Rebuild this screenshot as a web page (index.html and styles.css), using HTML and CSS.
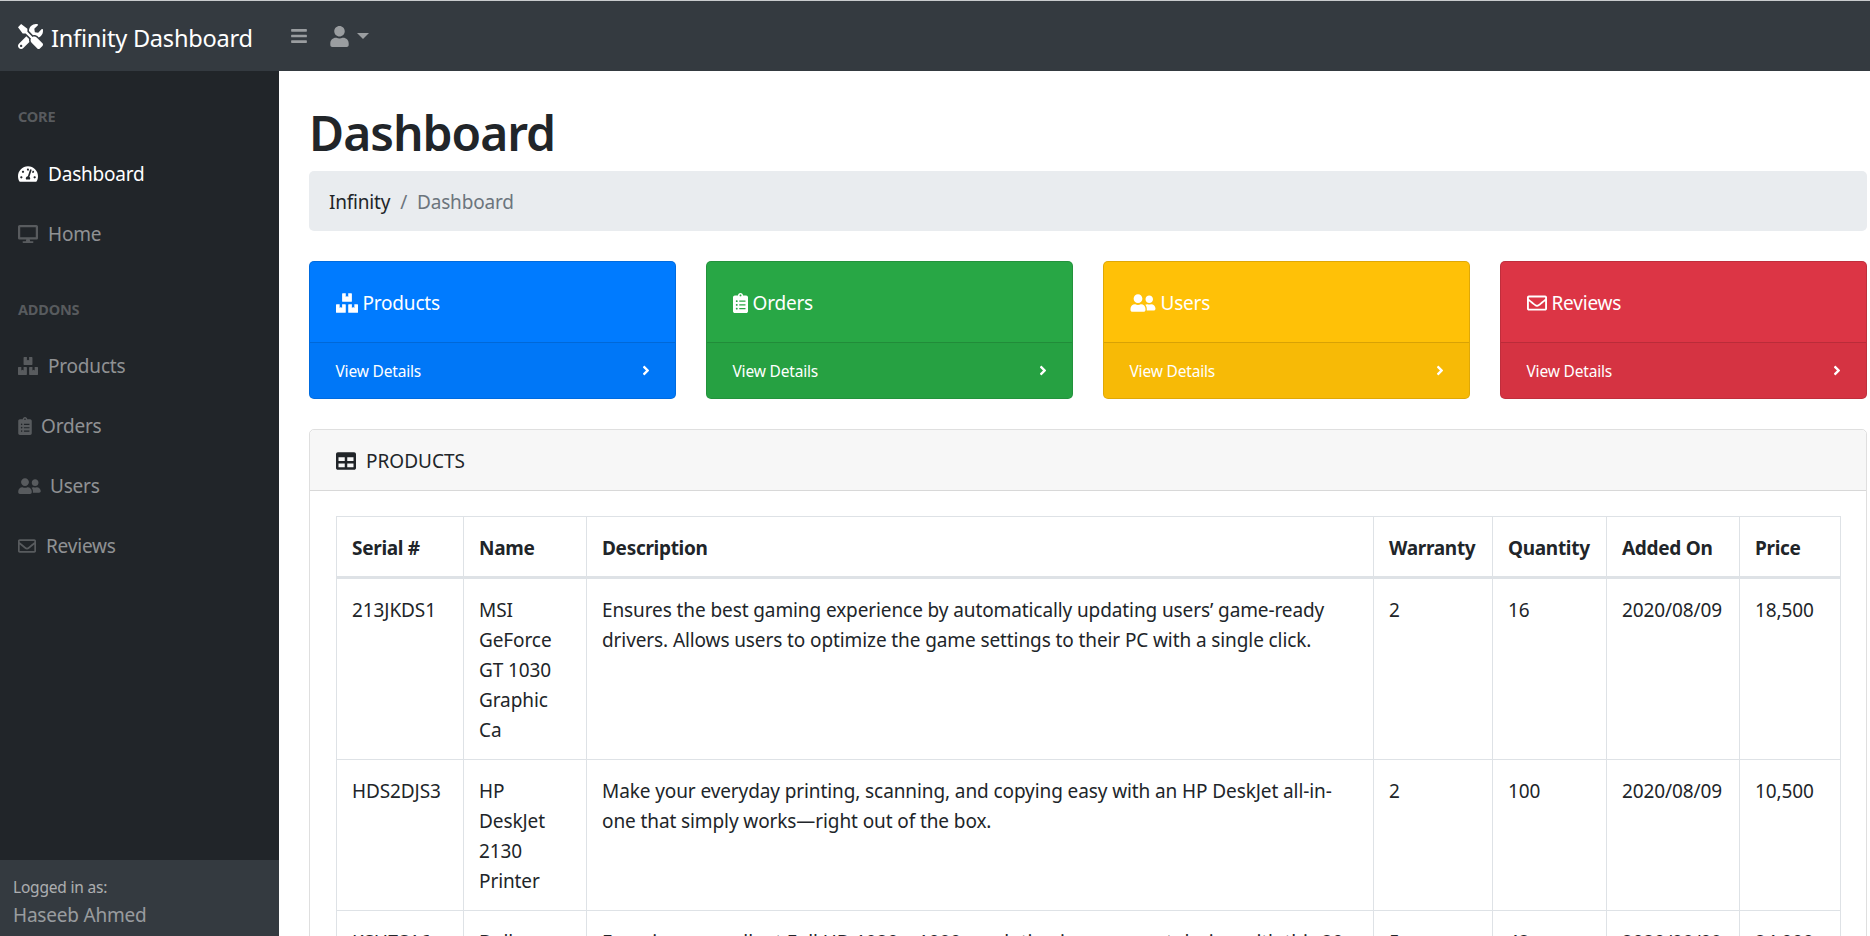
FILE: index.html
```html
<!DOCTYPE html>
<html lang="en">
  <head>
    <meta charset="UTF-8" />
    <meta name="viewport" content="width=device-width, initial-scale=1.0" />
    <title>Infinity Dashboard</title>
    <link rel="stylesheet" href="styles.css">
  </head>
  <body>
    <svg class="icon-defs" xmlns="http://www.w3.org/2000/svg">
      <symbol id="i-tools" viewBox="0 0 512 512"><path d="M501.1 395.7L384 278.6c-23.1-23.1-57.6-27.6-85.4-13.9L192 158.1V96L64 0 0 64l96 128h62.1l106.6 106.6c-13.6 27.8-9.2 62.3 13.9 85.4l117.1 117.1c14.6 14.6 38.2 14.6 52.7 0l52.7-52.7c14.5-14.6 14.5-38.2 0-52.7zM331.7 225c28.3 0 54.9 11 74.9 31l19.4 19.4c15.8-6.9 30.8-16.5 43.8-29.5 37.1-37.1 49.7-89.3 37.9-136.7-2.2-9-13.5-12.1-20.1-5.5l-74.4 74.4-67.9-11.3L334 98.9l74.4-74.4c6.6-6.6 3.4-17.9-5.7-20.2-47.4-11.7-99.6.9-136.6 37.9-28.5 28.5-41.9 66.1-41.2 103.6l82.1 82.1c8.1-1.9 16.5-2.9 24.7-2.9zm-103.9 82l-56.7-56.7L18.7 402.8c-25 25-25 65.5 0 90.5s65.5 25 90.5 0l123.6-123.6c-7.6-19.9-9.9-41.6-5-62.7zM64 472c-13.2 0-24-10.8-24-24 0-13.3 10.7-24 24-24s24 10.7 24 24c0 13.2-10.7 24-24 24z"/></symbol>
      <symbol id="i-bars" viewBox="0 0 448 512"><path d="M16 132h416c8.837 0 16-7.163 16-16V76c0-8.837-7.163-16-16-16H16C7.163 60 0 67.163 0 76v40c0 8.837 7.163 16 16 16zm0 160h416c8.837 0 16-7.163 16-16v-40c0-8.837-7.163-16-16-16H16c-8.837 0-16 7.163-16 16v40c0 8.837 7.163 16 16 16zm0 160h416c8.837 0 16-7.163 16-16v-40c0-8.837-7.163-16-16-16H16c-8.837 0-16 7.163-16 16v40c0 8.837 7.163 16 16 16z"/></symbol>
      <symbol id="i-user" viewBox="0 0 448 512"><path d="M224 256c70.7 0 128-57.3 128-128S294.7 0 224 0 96 57.3 96 128s57.3 128 128 128zm89.6 32h-16.7c-22.2 10.2-46.9 16-72.9 16s-50.6-5.8-72.9-16h-16.7C60.2 288 0 348.2 0 422.4V464c0 26.5 21.5 48 48 48h352c26.5 0 48-21.5 48-48v-41.6c0-74.2-60.2-134.4-134.4-134.4z"/></symbol>
      <symbol id="i-gauge" viewBox="0 0 576 512"><path d="M288 32C128.94 32 0 160.94 0 320c0 52.8 14.25 102.26 39.06 144.8 5.61 9.62 16.3 15.2 27.44 15.2h443c11.14 0 21.83-5.58 27.44-15.2C561.75 422.26 576 372.8 576 320c0-159.06-128.94-288-288-288zm0 64c14.71 0 26.58 10.13 30.32 23.65-1.11 2.26-2.64 4.23-3.45 6.67l-9.22 27.67c-5.13 3.49-10.97 6.01-17.64 6.01-17.67 0-32-14.33-32-32S270.33 96 288 96zM96 384c-17.67 0-32-14.33-32-32s14.33-32 32-32 32 14.33 32 32-14.33 32-32 32zm48-160c-17.67 0-32-14.33-32-32s14.33-32 32-32 32 14.33 32 32-14.33 32-32 32zm246.77-72.41l-61.33 184C343.13 347.33 352 364.54 352 384c0 11.72-3.38 22.55-8.88 32H232.88c-5.5-9.45-8.88-20.28-8.88-32 0-33.94 26.5-61.43 59.9-63.59l61.34-184.01c4.17-12.56 17.73-19.45 30.36-15.17 12.57 4.19 19.35 17.79 15.17 30.36zm14.66 57.2l15.52-46.55c3.47-1.29 7.13-2.23 11.05-2.23 17.67 0 32 14.33 32 32s-14.33 32-32 32c-11.38-.01-20.89-6.28-26.57-15.22zM480 384c-17.67 0-32-14.33-32-32s14.33-32 32-32 32 14.33 32 32-14.33 32-32 32z"/></symbol>
      <symbol id="i-desktop" viewBox="0 0 576 512"><path d="M528 0H48C21.5 0 0 21.5 0 48v320c0 26.5 21.5 48 48 48h192l-16 48h-72c-13.3 0-24 10.7-24 24s10.7 24 24 24h272c13.3 0 24-10.7 24-24s-10.7-24-24-24h-72l-16-48h192c26.5 0 48-21.5 48-48V48c0-26.5-21.5-48-48-48zm-16 352H64V64h448v288z"/></symbol>
      <symbol id="i-boxes" viewBox="0 0 576 512"><path d="M560 288h-80v96l-32-21.3-32 21.3v-96h-80c-8.8 0-16 7.2-16 16v192c0 8.8 7.2 16 16 16h224c8.8 0 16-7.2 16-16V304c0-8.8-7.2-16-16-16zm-384-64h224c8.8 0 16-7.2 16-16V16c0-8.8-7.2-16-16-16h-80v96l-32-21.3L256 96V0h-80c-8.8 0-16 7.2-16 16v192c0 8.8 7.2 16 16 16zm64 64h-80v96l-32-21.3L96 384v-96H16c-8.8 0-16 7.2-16 16v192c0 8.8 7.2 16 16 16h224c8.8 0 16-7.2 16-16V304c0-8.8-7.2-16-16-16z"/></symbol>
      <symbol id="i-clipboard" viewBox="0 0 384 512"><path d="M336 64h-80c0-35.3-28.7-64-64-64s-64 28.7-64 64H48C21.5 64 0 85.5 0 112v352c0 26.5 21.5 48 48 48h288c26.5 0 48-21.5 48-48V112c0-26.5-21.5-48-48-48zM96 424c-13.3 0-24-10.7-24-24s10.7-24 24-24 24 10.7 24 24-10.7 24-24 24zm0-96c-13.3 0-24-10.7-24-24s10.7-24 24-24 24 10.7 24 24-10.7 24-24 24zm0-96c-13.3 0-24-10.7-24-24s10.7-24 24-24 24 10.7 24 24-10.7 24-24 24zm96-192c13.3 0 24 10.7 24 24s-10.7 24-24 24-24-10.7-24-24 10.7-24 24-24zm128 368c0 4.4-3.6 8-8 8H168c-4.4 0-8-3.6-8-8v-16c0-4.4 3.6-8 8-8h144c4.4 0 8 3.6 8 8v16zm0-96c0 4.4-3.6 8-8 8H168c-4.4 0-8-3.6-8-8v-16c0-4.4 3.6-8 8-8h144c4.4 0 8 3.6 8 8v16zm0-96c0 4.4-3.6 8-8 8H168c-4.4 0-8-3.6-8-8v-16c0-4.4 3.6-8 8-8h144c4.4 0 8 3.6 8 8v16z"/></symbol>
      <symbol id="i-friends" viewBox="0 0 640 512"><path d="M192 256c61.9 0 112-50.1 112-112S253.9 32 192 32 80 82.1 80 144s50.1 112 112 112zm76.8 32h-8.3c-20.8 10-43.9 16-68.5 16s-47.6-6-68.5-16h-8.3C51.6 288 0 339.6 0 403.2V432c0 26.5 21.5 48 48 48h288c26.5 0 48-21.5 48-48v-28.8c0-63.6-51.6-115.2-115.2-115.2zM480 256c53 0 96-43 96-96s-43-96-96-96-96 43-96 96 43 96 96 96zm48 32h-3.8c-13.9 4.8-28.6 8-44.2 8s-30.3-3.2-44.2-8H432c-20.4 0-39.2 5.9-55.7 15.4 24.4 26.3 39.7 61.2 39.7 99.8v38.4c0 2.2-.5 4.3-.6 6.4H592c26.5 0 48-21.5 48-48 0-61.9-50.1-112-112-112z"/></symbol>
      <symbol id="i-envelope" viewBox="0 0 512 512"><path d="M464 64H48C21.49 64 0 85.49 0 112v288c0 26.51 21.49 48 48 48h416c26.51 0 48-21.49 48-48V112c0-26.51-21.49-48-48-48zm0 48v40.805c-22.422 18.259-58.168 46.651-134.587 106.49-16.841 13.247-50.201 45.072-73.413 44.701-23.208.375-56.579-31.459-73.413-44.701C106.18 199.465 70.425 171.067 48 152.805V112h416zM48 400V214.398c22.914 18.251 55.409 43.862 104.938 82.646 21.857 17.205 60.134 55.186 103.062 54.955 42.717.231 80.509-37.199 103.053-54.947 49.528-38.783 82.032-64.401 104.947-82.653V400H48z"/></symbol>
      <symbol id="i-angle" viewBox="0 0 256 512"><path d="M224.3 273l-136 136c-9.4 9.4-24.6 9.4-33.9 0l-22.6-22.6c-9.4-9.4-9.4-24.6 0-33.9l96.4-96.4-96.4-96.4c-9.4-9.4-9.4-24.6 0-33.9L54.3 103c9.4-9.4 24.6-9.4 33.9 0l136 136c9.5 9.4 9.5 24.6.1 34z"/></symbol>
      <symbol id="i-table" viewBox="0 0 512 512"><path d="M464 32H48C21.49 32 0 53.49 0 80v352c0 26.51 21.49 48 48 48h416c26.51 0 48-21.49 48-48V80c0-26.51-21.49-48-48-48zM224 416H64v-96h160v96zm0-160H64v-96h160v96zm224 160H288v-96h160v96zm0-160H288v-96h160v96z"/></symbol>
    </svg>

    <nav class="topbar">
      <a class="brand" href="#">
        <svg class="brand-icon"><use href="#i-tools" /></svg>
        <span class="brand-name">Infinity Dashboard</span>
      </a>
      <button class="top-btn"><svg class="bars-icon"><use href="#i-bars" /></svg></button>
      <button class="top-btn user-btn">
        <svg class="user-icon"><use href="#i-user" /></svg>
        <span class="caret"></span>
      </button>
    </nav>

    <div class="layout">
      <aside class="sidebar">
        <div class="side-menu">
          <div class="side-heading">CORE</div>
          <a class="side-link active" href="#"><svg class="side-icon w-gauge"><use href="#i-gauge" /></svg>Dashboard</a>
          <a class="side-link" href="#"><svg class="side-icon w-gauge"><use href="#i-desktop" /></svg>Home</a>
          <div class="side-heading">ADDONS</div>
          <a class="side-link" href="#"><svg class="side-icon w-gauge"><use href="#i-boxes" /></svg>Products</a>
          <a class="side-link" href="#"><svg class="side-icon w-clip"><use href="#i-clipboard" /></svg>Orders</a>
          <a class="side-link" href="#"><svg class="side-icon w-friends"><use href="#i-friends" /></svg>Users</a>
          <a class="side-link" href="#"><svg class="side-icon w-env"><use href="#i-envelope" /></svg>Reviews</a>
        </div>
        <div class="side-footer">
          <div class="logged-label">Logged in as:</div>
          <div class="logged-name">Haseeb Ahmed</div>
        </div>
      </aside>

      <main class="content">
        <h1>Dashboard</h1>
        <ol class="crumbs">
          <li><a href="#">Infinity</a></li>
          <li class="crumb-sep">/</li>
          <li class="crumb-now">Dashboard</li>
        </ol>

        <div class="stat-row">
          <div class="stat-card blue">
            <div class="stat-body"><svg class="stat-icon boxes"><use href="#i-boxes" /></svg>Products</div>
            <a class="stat-foot" href="#">View Details <svg class="angle"><use href="#i-angle" /></svg></a>
          </div>
          <div class="stat-card green">
            <div class="stat-body"><svg class="stat-icon clip"><use href="#i-clipboard" /></svg>Orders</div>
            <a class="stat-foot" href="#">View Details <svg class="angle"><use href="#i-angle" /></svg></a>
          </div>
          <div class="stat-card yellow">
            <div class="stat-body"><svg class="stat-icon friends"><use href="#i-friends" /></svg>Users</div>
            <a class="stat-foot" href="#">View Details <svg class="angle"><use href="#i-angle" /></svg></a>
          </div>
          <div class="stat-card red">
            <div class="stat-body"><svg class="stat-icon env"><use href="#i-envelope" /></svg>Reviews</div>
            <a class="stat-foot" href="#">View Details <svg class="angle"><use href="#i-angle" /></svg></a>
          </div>
        </div>

        <div class="panel">
          <div class="panel-head"><svg class="table-icon"><use href="#i-table" /></svg>PRODUCTS</div>
          <div class="panel-body">
            <table class="products">
              <thead>
                <tr>
                  <th class="c-serial">Serial #</th>
                  <th class="c-name">Name</th>
                  <th class="c-desc">Description</th>
                  <th class="c-warranty">Warranty</th>
                  <th class="c-qty">Quantity</th>
                  <th class="c-added">Added On</th>
                  <th class="c-price">Price</th>
                </tr>
              </thead>
              <tbody>
                <tr>
                  <td>213JKDS1</td>
                  <td>MSI GeForce GT 1030 Graphic Ca</td>
                  <td>Ensures the best gaming experience by automatically updating users’ game-ready drivers. Allows users to optimize the game settings to their PC with a single click.</td>
                  <td>2</td>
                  <td>16</td>
                  <td>2020/08/09</td>
                  <td>18,500</td>
                </tr>
                <tr>
                  <td>HDS2DJS3</td>
                  <td>HP DeskJet 2130 Printer</td>
                  <td>Make your everyday printing, scanning, and copying easy with an HP DeskJet all-in-one that simply works—right out of the box.</td>
                  <td>2</td>
                  <td>100</td>
                  <td>2020/08/09</td>
                  <td>10,500</td>
                </tr>
                <tr>
                  <td>KSU7S16</td>
                  <td>Dell Monitor</td>
                  <td>Experience excellent Full HD 1920 x 1080 resolution in a compact design with this 20-Tab display.</td>
                  <td>5</td>
                  <td>42</td>
                  <td>2020/08/09</td>
                  <td>24,000</td>
                </tr>
              </tbody>
            </table>
          </div>
        </div>
      </main>
    </div>
  </body>
</html>
```

FILE: styles.css
```css
html,
body {
  height: 100%;
}
body {
  margin: 0;
  font-family: "Noto Sans", "Open Sans", sans-serif;
  font-size: 19px;
  line-height: 30px;
  letter-spacing: -0.2px;
  color: #212529;
  background: #ffffff;
  overflow: hidden;
  display: flex;
  flex-direction: column;
}
a {
  text-decoration: none;
  color: inherit;
}
.icon-defs {
  display: none;
}
svg {
  fill: currentColor;
  flex: none;
}

/* top bar */
.topbar {
  height: 70px;
  flex: none;
  display: flex;
  align-items: center;
  background: #343a40;
  border-top: 1px solid #c9cbcd;
  color: #ffffff;
}
.brand {
  width: 291px;
  padding-left: 18px;
  box-sizing: border-box;
  display: flex;
  align-items: center;
  font-size: 23.6px;
  letter-spacing: -0.25px;
}
.brand-name {
  padding-top: 3px;
}
.brand-icon {
  width: 25px;
  height: 25px;
  margin-right: 8px;
  margin-top: 1px;
}
.top-btn {
  background: none;
  border: none;
  padding: 0;
  color: rgba(255, 255, 255, 0.5);
  display: flex;
  align-items: center;
}
.bars-icon {
  width: 16px;
  height: 18px;
}
.user-btn {
  margin-left: 23px;
}
.user-icon {
  width: 19px;
  height: 21px;
}
.caret {
  margin-left: 8px;
  border-top: 6px solid;
  border-left: 6px solid transparent;
  border-right: 6px solid transparent;
}

/* sidebar */
.layout {
  flex: 1;
  display: flex;
  min-height: 0;
}
.sidebar {
  width: 279px;
  flex: none;
  display: flex;
  flex-direction: column;
  background: #212529;
}
.side-menu {
  flex: 1;
}
.side-heading {
  padding: 34px 18px 16.5px;
  font-size: 14.5px;
  line-height: 22px;
  font-weight: 700;
  letter-spacing: -0.2px;
  color: rgba(255, 255, 255, 0.25);
}
.side-link {
  display: flex;
  align-items: center;
  height: 60px;
  padding-left: 18px;
  color: rgba(255, 255, 255, 0.5);
}
.side-link.active {
  color: #ffffff;
}
.side-icon {
  color: rgba(255, 255, 255, 0.25);
  height: 18px;
}
.active .side-icon {
  color: #ffffff;
}
.w-gauge {
  width: 20px;
  margin-right: 10px;
}
.w-clip {
  width: 14px;
  margin-right: 9px;
}
.w-friends {
  width: 23px;
  margin-right: 9px;
}
.w-env {
  width: 18px;
  margin-right: 10px;
}
.side-footer {
  height: 76px;
  flex: none;
  box-sizing: border-box;
  padding: 15px 13px 0;
  background: #343a40;
  color: rgba(255, 255, 255, 0.5);
}
.logged-label {
  font-size: 15.5px;
  line-height: 24px;
  color: rgba(255, 255, 255, 0.6);
}
.logged-name {
  padding-top: 1px;
  line-height: 30px;
}

/* main */
.content {
  flex: 1;
  min-width: 0;
  padding: 30px 3px 0 30px;
}
h1 {
  margin: 0 0 6px;
  font-size: 48px;
  line-height: 64px;
  font-weight: 600;
  letter-spacing: -1px;
}
.crumbs {
  list-style: none;
  margin: 0 0 30px;
  padding: 16px 20px 14px;
  display: flex;
  gap: 10px;
  background: #e9ecef;
  border-radius: 5px;
}
.crumb-sep,
.crumb-now {
  color: #6c757d;
}

.stat-row {
  display: grid;
  grid-template-columns: repeat(4, 1fr);
  gap: 30px;
  margin-bottom: 30px;
}
.stat-card {
  color: #ffffff;
  border-radius: 5px;
  border: 1px solid rgba(0, 0, 0, 0.125);
  overflow: hidden;
}
.blue {
  background: #007bff;
}
.green {
  background: #28a745;
}
.yellow {
  background: #ffc107;
}
.red {
  background: #dc3545;
}
.stat-body {
  height: 80px;
  box-sizing: border-box;
  padding: 2px 25.5px 0;
  display: flex;
  align-items: center;
}
.stat-icon {
  height: 20px;
  margin-right: 5px;
}
.stat-icon.boxes {
  width: 22px;
}
.stat-icon.clip {
  width: 15px;
}
.stat-icon.friends {
  width: 26px;
}
.stat-icon.env {
  width: 20px;
}
.stat-foot {
  height: 56px;
  box-sizing: border-box;
  padding: 0 25px 0 25.5px;
  display: flex;
  align-items: center;
  justify-content: space-between;
  font-size: 15.5px;
  letter-spacing: -0.18px;
  background: rgba(0, 0, 0, 0.03);
  border-top: 1px solid rgba(0, 0, 0, 0.125);
}
.angle {
  width: 8px;
  height: 15px;
}

.panel {
  border: 1px solid rgba(0, 0, 0, 0.125);
  border-radius: 5px;
}
.panel-head {
  height: 61px;
  box-sizing: border-box;
  padding: 2px 26px 0;
  display: flex;
  align-items: center;
  letter-spacing: 0;
  background: #f7f7f7;
  border-bottom: 1px solid rgba(0, 0, 0, 0.125);
  border-radius: 5px 5px 0 0;
}
.table-icon {
  width: 20px;
  height: 20px;
  margin-right: 10px;
}
.panel-body {
  padding: 25px 26px;
}
.products {
  width: 1504px;
  table-layout: fixed;
  border-collapse: collapse;
  letter-spacing: -0.1px;
}
.products th,
.products td {
  box-sizing: border-box;
  border: 1px solid #dee2e6;
  padding: 16px 15px 14px;
  text-align: left;
  vertical-align: top;
}
.products th {
  font-weight: 700;
  border-bottom-width: 3px;
  padding: 16px 15px 13px;
  white-space: nowrap;
  letter-spacing: -0.3px;
}
.c-serial {
  width: 127px;
}
.c-name {
  width: 123px;
}
.c-desc {
  width: 787px;
}
.c-warranty {
  width: 119px;
}
.c-qty {
  width: 114px;
}
.c-added {
  width: 133px;
}
.c-price {
  width: 101px;
}
```
